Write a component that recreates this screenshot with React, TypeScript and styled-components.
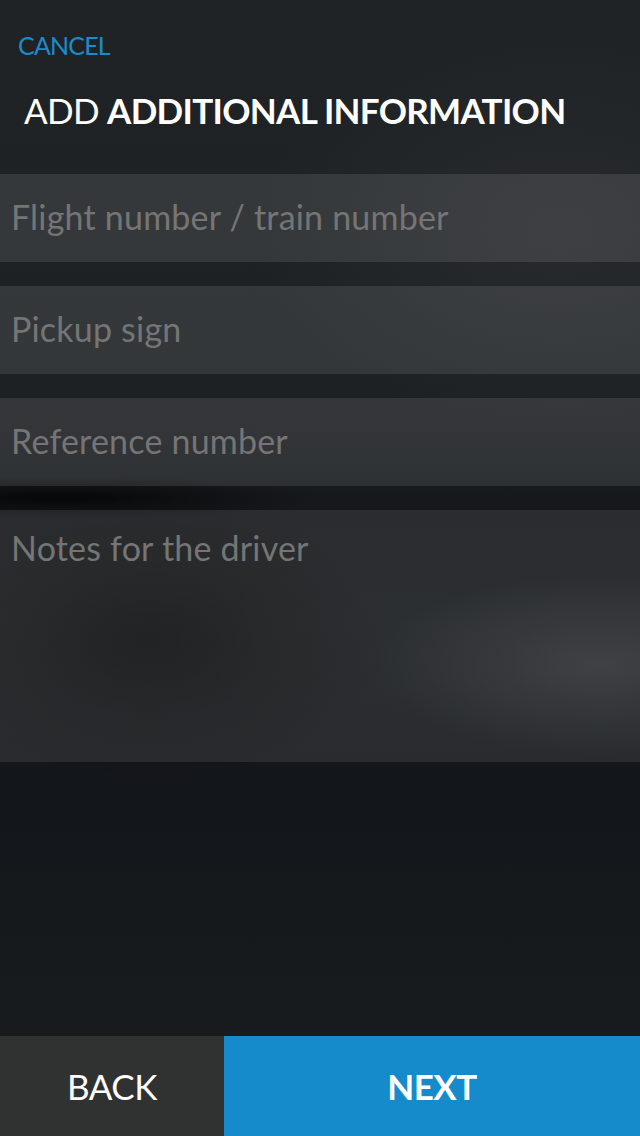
import React from 'react';
import styled, {createGlobalStyle} from 'styled-components';

const GlobalStyle = createGlobalStyle`
    html, body {
        margin: 0;
        padding: 0;
        background: #16191c;
    }
    * {
        box-sizing: border-box;
    }
`

const Page = styled.div`
    width: 640px;
    height: 1136px;
    display: flex;
    flex-direction: column;
    font-family: Lato, "Open Sans", sans-serif;
    overflow: hidden;
    background:
        radial-gradient(ellipse 240px 140px at 150px 640px, rgba(10, 10, 10, 0.8), rgba(10, 10, 10, 0) 100%),
        radial-gradient(ellipse 260px 22px at 60px 498px, rgba(0, 0, 0, 0.75), rgba(0, 0, 0, 0) 100%),
        radial-gradient(ellipse 230px 90px at 600px 665px, rgba(62, 64, 67, 0.55), rgba(62, 64, 67, 0) 100%),
        radial-gradient(ellipse 300px 200px at 560px 230px, rgba(60, 63, 66, 0.3), rgba(60, 63, 66, 0) 100%),
        linear-gradient(180deg, #202326 0%, #1e2124 36%, #15181b 45%, #181b1e 55%, #13161a 70%, #181b1e 90%);
`

const Header = styled.div`
    display: flex;
    flex-direction: column;
    padding: 30px 0 0 0;
    height: 174px;
`

const CancelLink = styled.a`
    font-size: 25px;
    line-height: 30px;
    color: #1d8bc9;
    padding-left: 18px;
    text-transform: uppercase;
    letter-spacing: -0.8px;
    cursor: pointer;
`

const Title = styled.h1`
    margin: 29px 0 0 0;
    padding-left: 24px;
    font-size: 35px;
    line-height: 42px;
    font-weight: 400;
    color: #ffffff;
    letter-spacing: -0.7px;

    strong {
        font-weight: 700;
    }
`

const Form = styled.div`
    display: flex;
    flex-direction: column;
    gap: 24px;
`

const Field = styled.input`
    width: 100%;
    height: 88px;
    border: none;
    outline: none;
    margin: 0;
    padding: 0 0 4px 11px;
    background: rgba(255, 255, 255, 0.1);
    font-family: Lato, "Open Sans", sans-serif;
    font-size: 34px;
    letter-spacing: 0.2px;
    color: #d8d9da;

    ::placeholder {
        color: #86888a;
    }
`

const Notes = styled.textarea`
    width: 100%;
    height: 252px;
    border: none;
    outline: none;
    resize: none;
    margin: 0;
    padding: 18px 0 0 11px;
    background: rgba(255, 255, 255, 0.09);
    font-family: Lato, "Open Sans", sans-serif;
    font-size: 34px;
    line-height: 40px;
    letter-spacing: 0.2px;
    color: #d8d9da;
    display: block;

    ::placeholder {
        color: #86888a;
    }
`

const Spacer = styled.div`
    flex: 1;
`

const Footer = styled.div`
    display: grid;
    grid-template-columns: 224px 1fr;
    height: 100px;
`

const FooterButton = styled.button<{primary?: boolean}>`
    border: none;
    margin: 0;
    padding: 0;
    background-color: ${props => props.primary ? '#168bcb' : '#303131'};
    color: #ffffff;
    font-family: Lato, "Open Sans", sans-serif;
    font-size: 35px;
    letter-spacing: -0.5px;
    font-weight: ${props => props.primary ? 700 : 400};
    text-transform: uppercase;
    cursor: pointer;
`

export default function App() {
    return (
        <>
        <GlobalStyle />
        <Page>
            <Header>
                <CancelLink>Cancel</CancelLink>
                <Title>ADD <strong>ADDITIONAL INFORMATION</strong></Title>
            </Header>
            <Form>
                <Field placeholder="Flight number / train number" />
                <Field placeholder="Pickup sign" />
                <Field placeholder="Reference number" />
                <Notes placeholder="Notes for the driver" />
            </Form>
            <Spacer />
            <Footer>
                <FooterButton>Back</FooterButton>
                <FooterButton primary>Next</FooterButton>
            </Footer>
        </Page>
        </>
    )
}
